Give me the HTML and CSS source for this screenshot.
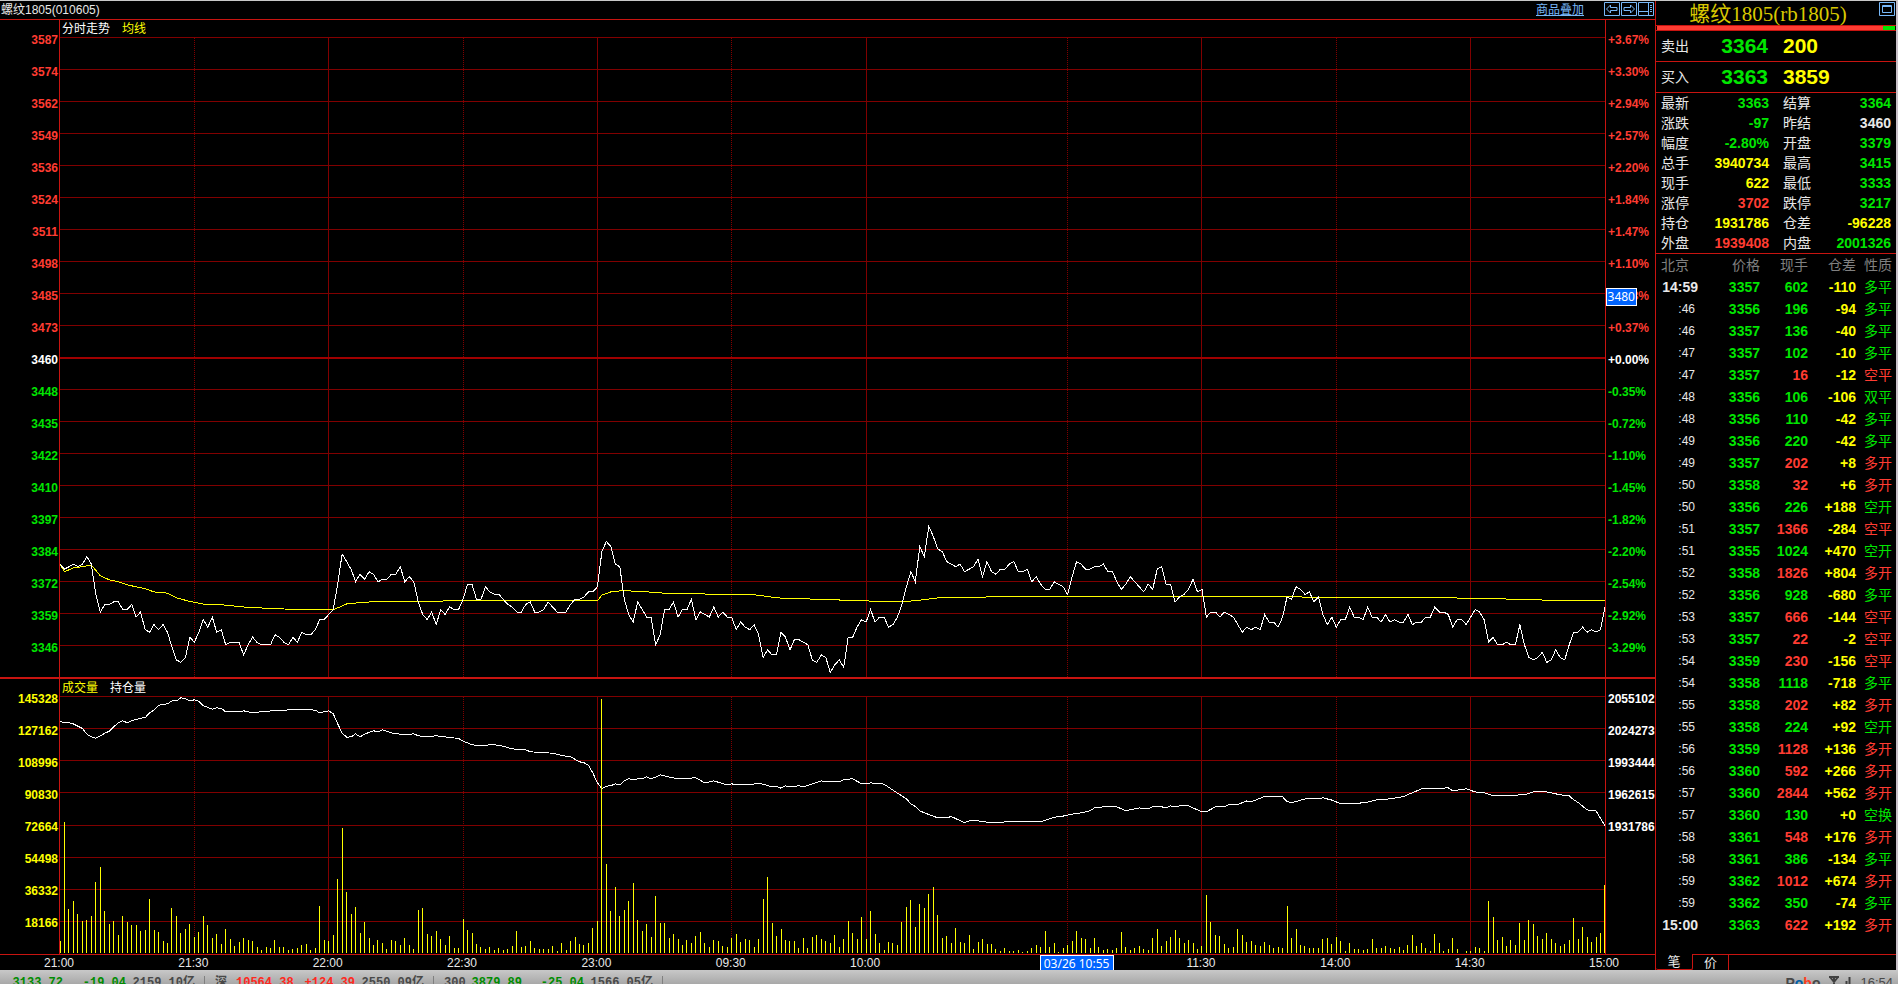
FILE: index.html
```html
<!DOCTYPE html>
<html lang="zh-CN">
<head>
    <meta charset="UTF-8">
    <meta name="viewport" content="width=device-width, initial-scale=1.0">
    <title>螺纹1805 分时走势</title>
    <link rel="stylesheet" href="styles.css">
</head>
<body>
    <div class="workspace">
        <main class="charts">
            <header class="chart-title">
                <span>螺纹1805(010605)</span>
                <div class="chart-tools">
                    <a href="#" class="overlay-link">商品叠加</a>
                    <button class="icon-btn" aria-label="上一个">
                        <svg width="16" height="14" viewBox="0 0 16 14"><path d="M.5.5h15v13H.5zM2.5 7l4-4v2.5h6.500v3h-6.500V11z"/></svg>
                    </button>
                    <button class="icon-btn" aria-label="下一个">
                        <svg width="16" height="14" viewBox="0 0 16 14"><path d="M.5.5h15v13H.5zM13.500 7l-4-4v2.500H3v3h6.500V11z"/></svg>
                    </button>
                    <button class="icon-btn" aria-label="布局">
                        <svg width="16" height="14" viewBox="0 0 16 14"><path d="M.5.5h15v13H.5zM10.500.5v13M.5 9.500h10M12 3.500h2M12 5.500h2M12 7.500h2M12 9.500h2"/></svg>
                    </button>
                </div>
            </header>

            <section class="price-chart">
                <div class="axis axis-left price-axis" id="priceAxis"></div>
                <div class="plot">
                    <div class="legend"><span class="white">分时走势</span><span class="yellow">均线</span></div>
                    <svg id="priceSvg" viewBox="0 0 1545 657" preserveAspectRatio="none"></svg>
                </div>
                <div class="axis axis-right price-axis" id="percentAxis"></div>
                <div class="cursor-price">3480</div>
            </section>

            <section class="volume-chart">
                <div class="axis axis-left volume-axis yellow" id="volumeAxis"></div>
                <div class="plot">
                    <div class="legend"><span class="yellow">成交量</span><span class="white">持仓量</span></div>
                    <svg id="volumeSvg" viewBox="0 0 1545 275" preserveAspectRatio="none"></svg>
                </div>
                <div class="axis axis-right volume-axis white" id="holdAxis"></div>
            </section>

            <footer class="time-axis">
                <span>21:00</span><span>21:30</span><span>22:00</span><span>22:30</span><span>23:00</span><span>09:30</span><span>10:00</span>
                <span class="cursor-time">03/26 10:55</span>
                <span>11:30</span><span>14:00</span><span>14:30</span><span>15:00</span>
            </footer>
        </main>

        <aside class="quote">
            <header class="quote-title">
                <h1>螺纹1805(rb1805)</h1>
                <button class="icon-btn" aria-label="窗口">
                    <svg width="16" height="14" viewBox="0 0 16 14"><path d="M.5.5h15v13H.5zM3.500 3.500h9v7h-9zM3.500 4.500h9"/></svg>
                </button>
            </header>
            <div class="ratio-bar"><i></i></div>
            <div class="order"><span>卖出</span><b class="green">3364</b><b class="yellow">200</b></div>
            <div class="order"><span>买入</span><b class="green">3363</b><b class="yellow">3859</b></div>

            <table class="stats">
                <tr><th>最新</th><td class="green">3363</td><th>结算</th><td class="green">3364</td></tr>
                <tr><th>涨跌</th><td class="green">-97</td><th>昨结</th><td>3460</td></tr>
                <tr><th>幅度</th><td class="green">-2.80%</td><th>开盘</th><td class="green">3379</td></tr>
                <tr><th>总手</th><td class="yellow">3940734</td><th>最高</th><td class="green">3415</td></tr>
                <tr><th>现手</th><td class="yellow">622</td><th>最低</th><td class="green">3333</td></tr>
                <tr><th>涨停</th><td class="red">3702</td><th>跌停</th><td class="green">3217</td></tr>
                <tr><th>持仓</th><td class="yellow">1931786</td><th>仓差</th><td class="yellow">-96228</td></tr>
                <tr><th>外盘</th><td class="red">1939408</td><th>内盘</th><td class="green">2001326</td></tr>
            </table>

            <table class="trades">
                <thead>
                    <tr><th class="col-time">北京</th><th class="col-price">价格</th><th class="col-num">现手</th><th class="col-num">仓差</th><th class="col-kind">性质</th></tr>
                </thead>
                <tbody id="trades"></tbody>
            </table>

            <nav class="tabs">
                <button class="tab active">笔</button>
                <button class="tab">价</button>
            </nav>
        </aside>
    </div>

    <footer class="status-bar">
        <div class="index first"><span class="up-dark">3133.72</span><span class="up-dark">-19.04</span><span>2159.10亿</span></div>
        <div class="index"><em>深</em><span class="down-dark">10564.38</span><span class="down-dark">+124.39</span><span>2550.09亿</span></div>
        <div class="index"><em>300</em><span class="up-dark">3879.89</span><span class="up-dark">-25.04</span><span>1566.05亿</span></div>
        <div class="status-right">
            <span class="brand">P<i class="blue">o</i><i class="orange">b</i>o</span>
            <svg width="22" height="12" viewBox="0 0 22 12"><path d="M0 1h10M1 1l4 5 4-5M5 1v11M14.500 9v3M17.500 5v7M20.500 1v11"/></svg>
            <span class="clock">16:54</span>
        </div>
    </footer>

    <script src="script.js"></script>
</body>
</html>
```

FILE: styles.css
```css
* {
    box-sizing: border-box;
}

body {
    display: flex;
    flex-direction: column;
    height: 100vh;
    margin: 0;
    overflow: hidden;
    border-top: 1px solid #c8c8c8;
    background-color: #000;
    color: #e8e8e8;
    font-family: "Liberation Sans", "Noto Sans CJK SC", sans-serif;
    font-size: 12px;
    line-height: 14px;
}

.red { color: #ff3c32; }
.green { color: #00e600; }
.yellow { color: #ffff00; }
.white { color: #fff; }

.workspace {
    display: flex;
    flex: 1;
    min-height: 0;
}

/* charts */
.charts {
    display: flex;
    flex: 1;
    flex-direction: column;
    min-width: 0;
}

.chart-title {
    display: flex;
    justify-content: space-between;
    height: 19px;
    padding: 1px 1px 0 1px;
    border-bottom: 1px solid #c81410;
    line-height: 16px;
}

.chart-tools {
    display: flex;
    align-items: flex-start;
    gap: 1px;
}

.overlay-link {
    margin-right: 19px;
    color: #78b8f8;
}

.icon-btn {
    height: 14px;
    padding: 0;
    border: 0;
    background: none;
    cursor: pointer;
}

.icon-btn svg {
    display: block;
    fill: none;
    stroke: #78b8f8;
}

.price-chart,
.volume-chart {
    display: flex;
    position: relative;
    min-height: 0;
}

.price-chart {
    flex: 657;
}

.volume-chart {
    flex: 275;
    border-top: 2px solid #c81410;
    border-bottom: 1px solid #c81410;
}

.plot {
    position: relative;
    flex: 1;
    min-width: 0;
}

.plot svg {
    display: block;
    position: absolute;
    width: 100%;
    height: 100%;
    fill: none;
    shape-rendering: crispEdges;
}

.legend {
    display: flex;
    position: absolute;
    top: 2px;
    left: 2px;
    gap: 12px;
}

.axis {
    display: flex;
    flex-direction: column;
    font-weight: bold;
}

.axis span {
    display: flex;
    flex: 32;
    align-items: center;
}

.price-axis {
    padding: 4px 0 13px;
}

.volume-axis {
    padding: 4px 0 15px;
}

.axis-left {
    width: 60px;
    padding-right: 1px;
    border-right: 1px solid #c81410;
}

.axis-left span {
    justify-content: flex-end;
}

.axis-right {
    width: 50px;
    padding-left: 2px;
    border-left: 1px solid #c81410;
}

.cursor-price {
    position: absolute;
    top: 268px;
    right: 18px;
    padding: 1px;
    border: 1px solid #fff;
    background-color: #0064ff;
    color: #fff;
    font-family: "Noto Sans", sans-serif;
    font-size: 12px;
    line-height: 14px;
}

.time-axis {
    display: grid;
    grid-template-columns: repeat(6, 30fr) 47fr 28fr repeat(3, 30fr) 0;
    height: 15px;
    padding: 0 50px 0 60px;
    line-height: 16px;
}

.time-axis span {
    width: 34px;
    margin-left: -18px;
    text-align: center;
}

.time-axis .cursor-time {
    width: 74px;
    margin-left: -37px;
    border: 1px solid #fff;
    border-bottom: 0;
    background-color: #0064ff;
    color: #fff;
    font-family: "Noto Sans", sans-serif;
}

/* quote panel */
.quote {
    display: flex;
    flex-direction: column;
    width: 243px;
    border-right: 2px solid #c8c0c8;
    border-left: 1px solid #c81410;
    font-size: 14px;
}

.quote-title {
    display: flex;
    align-items: flex-start;
    height: 25px;
    padding: 1px 1px 0 1px;
    border-bottom: 1px solid #c81410;
}

.quote-title h1 {
    flex: 1;
    margin: 0;
    color: #d8c800;
    font-family: "Liberation Serif", "Noto Sans CJK SC", serif;
    font-size: 21px;
    font-weight: normal;
    line-height: 24px;
    text-align: center;
}

.ratio-bar {
    height: 4px;
    margin: 0 1px;
    background-color: #ff3c32;
}

.ratio-bar i {
    display: block;
    width: 5%;
    height: 4px;
    margin-left: 95%;
    background-color: #00e600;
}

.order {
    display: grid;
    grid-template-columns: 47px 60px 1fr;
    align-items: center;
    height: 31px;
    padding-left: 5px;
    border-top: 1px solid #c81410;
}

.order b {
    font-size: 21px;
    line-height: 28px;
    text-align: right;
}

.order b + b {
    padding-left: 15px;
    text-align: left;
}

table {
    width: 100%;
    border-collapse: collapse;
    table-layout: fixed;
}

th {
    padding: 0;
    font-weight: normal;
    text-align: left;
}

td {
    padding: 0;
    font-weight: bold;
    text-align: right;
}

.stats {
    border-top: 1px solid #c81410;
}

.stats tr {
    height: 20px;
}

.stats th:first-child {
    width: 42px;
    padding-left: 5px;
}

.stats td {
    width: 71px;
}

.stats th + td + th {
    width: 42px;
    padding-left: 14px;
}

.stats td:last-child {
    width: 85px;
    padding-right: 5px;
}

.trades {
    border-top: 1px solid #c81410;
}

.trades tr {
    height: 22px;
}

.trades thead tr {
    height: 23px;
}

.trades th {
    color: #808080;
    text-align: right;
}

.trades .col-time {
    width: 42px;
    padding-left: 5px;
    text-align: left;
}

.col-price { width: 62px; }
.col-num { width: 48px; }

.trades .col-kind,
.trades td:last-child {
    width: 40px;
    padding-right: 4px;
    font-weight: normal;
}

.trades .second {
    padding-right: 3px;
    font-size: 12px;
    font-weight: normal;
}

.tabs {
    display: flex;
    height: 16px;
    margin-top: auto;
}

.tabs::after {
    flex: 1;
    border-top: 1px solid #c81410;
    content: "";
}

.tab {
    width: 36px;
    padding: 0;
    border: solid #c81410;
    border-width: 1px 1px 0 0;
    background: none;
    color: #e8e8e8;
    font-family: inherit;
    font-size: 13px;
    line-height: 15px;
    cursor: pointer;
}

.tab.active {
    width: 37px;
    border-width: 0 1px 1px 0;
    border-radius: 0 0 2px 2px;
}

/* status bar */
.status-bar {
    display: flex;
    height: 14px;
    padding-top: 6px;
    overflow: hidden;
    background: linear-gradient(#c8c8c8, #a8a8a8);
    color: #484848;
    font-family: "Liberation Mono", "Noto Sans CJK SC", monospace;
    font-weight: bold;
}

.index {
    display: grid;
    grid-template-columns: 21px 57px 62px 69px;
    padding: 0 9px 0 10px;
    border-right: 1px solid #808080;
    text-align: right;
}

.index.first {
    grid-template-columns: 63px 63px 69px;
    padding-left: 0;
}

.index em {
    font-style: normal;
    text-align: left;
}

.up-dark { color: #008c00; }
.down-dark { color: #ff2820; }

.status-right {
    display: flex;
    gap: 9px;
    margin-left: auto;
    padding-right: 5px;
}

.status-right svg {
    fill: none;
    stroke: #404040;
    stroke-width: 2;
}

.brand {
    font-family: "Liberation Sans", sans-serif;
    font-size: 14px;
}

.brand i {
    font-style: normal;
}

.blue { color: #0060a8; }
.orange { color: #ff3c20; }

.clock {
    font-family: "Liberation Sans", sans-serif;
    font-size: 13px;
    font-weight: normal;
}
```

FILE: script.js
```js
const MINUTES = 345;
const STEP = 1545 / MINUTES;
const GRID = '#800000';

const priceLabels = [3587, 3574, 3562, 3549, 3536, 3524, 3511, 3498, 3485, 3473, 3460, 3448, 3435, 3422, 3410, 3397, 3384, 3372, 3359, 3346];
const percentLabels = ['+3.67%', '+3.30%', '+2.94%', '+2.57%', '+2.20%', '+1.84%', '+1.47%', '+1.10%', '+0.73%', '+0.37%', '+0.00%',
    '-0.35%', '-0.72%', '-1.10%', '-1.45%', '-1.82%', '-2.20%', '-2.54%', '-2.92%', '-3.29%'];
const volumeLabels = [145328, 127162, 108996, 90830, 72664, 54498, 36332, 18166];
const holdLabels = [2055102, 2024273, 1993444, 1962615, 1931786, '', '', ''];

// last price of each minute, minus 3300
const prices = [
    78, 76, 77, 78, 77, 78, 81, 78, 66, 59, 62, 62, 63, 63, 60, 60, 62, 57, 59, 52, 51, 54, 52, 54, 51, 45, 40, 39, 41, 49,
    47, 51, 56, 53, 57, 51, 52, 46, 47, 47, 47, 42, 46, 49, 47, 46, 46, 46, 50, 49, 47, 46, 49, 47, 51, 50, 50, 52, 56, 56,
    58, 60, 70, 82, 79, 76, 71, 74, 72, 75, 74, 71, 72, 72, 74, 74, 77, 71, 73, 71, 63, 58, 56, 59, 54, 60, 58, 61, 60, 60,
    64, 70, 70, 64, 64, 69, 67, 66, 66, 64, 62, 61, 59, 59, 62, 63, 59, 59, 60, 63, 61, 59, 59, 59, 62, 64, 64, 65, 67, 67,
    69, 83, 87, 85, 78, 77, 64, 58, 55, 63, 60, 57, 57, 46, 50, 60, 60, 63, 57, 60, 60, 64, 56, 59, 58, 57, 61, 57, 59, 57,
    57, 52, 55, 53, 52, 54, 50, 41, 44, 42, 42, 51, 49, 44, 48, 48, 47, 46, 40, 39, 42, 41, 35, 38, 40, 37, 49, 49, 53, 56,
    55, 60, 55, 57, 57, 53, 54, 57, 62, 69, 75, 71, 85, 81, 93, 89, 84, 83, 79, 78, 77, 78, 75, 76, 77, 80, 73, 79, 75, 74,
    76, 76, 78, 79, 75, 75, 76, 71, 73, 70, 68, 68, 71, 70, 69, 66, 73, 79, 78, 76, 76, 77, 77, 78, 75, 75, 71, 68, 70, 73,
    71, 69, 67, 70, 68, 76, 77, 70, 70, 63, 65, 66, 68, 72, 67, 68, 57, 59, 59, 57, 59, 58, 57, 54, 51, 53, 52, 53, 52, 58,
    55, 55, 53, 57, 65, 64, 69, 68, 66, 67, 63, 65, 58, 54, 57, 53, 56, 56, 61, 57, 57, 56, 61, 57, 57, 55, 58, 55, 56, 55,
    55, 58, 54, 55, 55, 57, 57, 61, 59, 59, 58, 53, 56, 56, 54, 57, 60, 59, 56, 47, 49, 46, 46, 47, 46, 46, 54, 46, 41, 40,
    41, 43, 39, 40, 44, 41, 40, 46, 51, 51, 53, 51, 52, 51, 52, 61
];

// average line, [minute, price]
const average = [
    [0, 3378], [1, 3375], [3, 3376.5], [5, 3377], [7, 3377.7], [9, 3373.4], [11, 3371.8], [13, 3371], [15, 3369.8], [17, 3369],
    [19, 3368.3], [21, 3367], [24, 3366.5], [26, 3364.6], [29, 3363.2], [32, 3362.2], [35, 3362.2], [37, 3361.7], [41, 3361],
    [47, 3360.4], [55, 3359.9], [61, 3359.9], [64, 3362.2], [68, 3362.9], [73, 3363.3], [93, 3363.4], [120, 3363.4],
    [121, 3365.7], [123, 3367], [125, 3367.4], [127, 3367.4], [132, 3366.9], [137, 3366.2], [150, 3366.1], [156, 3365.7],
    [160, 3364.6], [180, 3363.4], [185, 3363], [188, 3363], [192, 3363.7], [196, 3364.6], [202, 3364.9], [230, 3365.3],
    [265, 3365.3], [280, 3364.9], [305, 3364.8], [322, 3364.2], [330, 3363.8], [338, 3363.4], [345, 3363.4]
];

// open interest, [minute, thousand lots]
const holdings = [
    [0, 2031.2], [2, 2030.2], [3, 2029.2], [5, 2024.8], [6, 2019.4], [7, 2016.8], [8, 2015.5], [9, 2017.8], [10, 2020.3],
    [11, 2022.2], [12, 2026.4], [13, 2029.9], [14, 2032.1], [15, 2030.2], [16, 2032.1], [18, 2034.7], [19, 2035], [20, 2039.8],
    [21, 2042.3], [22, 2047.1], [24, 2048.4], [25, 2051.2], [26, 2051.2], [27, 2054.1], [28, 2053.1], [29, 2051.2], [30, 2052.2],
    [31, 2050.9], [32, 2046.5], [34, 2043.3], [35, 2044.5], [36, 2044.2], [37, 2040.7], [40, 2040.7], [41, 2041.7], [43, 2039.8],
    [46, 2041.4], [49, 2041.7], [50, 2042.3], [54, 2043.3], [57, 2042.3], [58, 2039.8], [60, 2041.7], [61, 2038.8], [62, 2029.2],
    [63, 2020.6], [64, 2016.5], [65, 2016.8], [66, 2019.7], [67, 2016.8], [68, 2019.4], [70, 2022.6], [71, 2021.6], [72, 2023.5],
    [74, 2020.6], [77, 2018.7], [79, 2019.7], [80, 2017.8], [82, 2016.8], [84, 2017.8], [89, 2015.2], [90, 2012.7], [92, 2009.2],
    [94, 2008.2], [96, 2009.2], [98, 2008.9], [101, 2005.3], [104, 2004.4], [105, 2002.5], [110, 2001.2], [112, 1999],
    [114, 1997.7], [116, 1992.9], [117, 1992], [118, 1989.7], [119, 1982.1], [120, 1972.8], [121, 1967.4], [122, 1969.6],
    [123, 1970], [124, 1971.9], [125, 1970.9], [126, 1974.7], [127, 1976.7], [128, 1975.7], [129, 1976.7], [130, 1976.7],
    [131, 1978.6], [132, 1976.7], [133, 1978.3], [134, 1980.5], [136, 1978.3], [138, 1976.7], [142, 1977.6], [144, 1972.8],
    [146, 1974.7], [149, 1970.9], [150, 1971.9], [151, 1970.9], [156, 1971.9], [157, 1971.6], [159, 1969], [160, 1969.6],
    [161, 1967.7], [162, 1970], [163, 1969], [165, 1970], [166, 1969], [170, 1974.7], [171, 1973.8], [174, 1973.8], [175, 1976],
    [177, 1976.7], [179, 1971.9], [180, 1971.9], [181, 1972.8], [184, 1971.6], [186, 1965.8], [189, 1957.5], [190, 1952.8],
    [191, 1950.2], [192, 1946.1], [193, 1944.2], [196, 1939.4], [198, 1939.4], [199, 1940.6], [202, 1934.6], [203, 1936.5],
    [205, 1936.5], [208, 1934.6], [210, 1934.6], [211, 1935.6], [219, 1935.6], [222, 1940], [224, 1941], [226, 1942.9],
    [227, 1943.2], [230, 1946.1], [231, 1948.9], [233, 1949.9], [236, 1949.9], [238, 1946.1], [241, 1948.9], [243, 1948],
    [244, 1949.9], [246, 1949.9], [247, 1948.9], [248, 1950.8], [249, 1949.9], [250, 1950.8], [252, 1950.8], [255, 1945.1],
    [256, 1945.1], [258, 1949.9], [260, 1950.2], [261, 1951.8], [263, 1952.1], [265, 1955.6], [266, 1954.7], [269, 1959.8],
    [271, 1959.5], [273, 1959.5], [274, 1955], [275, 1953.7], [278, 1957.5], [281, 1957.5], [282, 1958.5], [284, 1956.3],
    [286, 1952.8], [289, 1952.8], [292, 1954.4], [294, 1956.6], [297, 1957.5], [300, 1959.8], [303, 1965.2], [304, 1967.1],
    [310, 1968], [311, 1965.2], [314, 1967.1], [316, 1964.2], [318, 1963.3], [320, 1960.4], [327, 1961.4], [329, 1964.2],
    [332, 1964.2], [335, 1961.4], [337, 1960.4], [338, 1956.6], [339, 1954], [341, 1947], [343, 1946.1], [345, 1931.8]
];

// volume of each minute, 1 unit = 566 lots
const volumes = [
    12, 131, 44, 52, 39, 32, 33, 37, 71, 86, 42, 29, 32, 18, 37, 31, 28, 28, 22, 23, 54, 23, 21, 12, 10, 45, 37, 20, 24, 29,
    16, 21, 37, 28, 15, 19, 9, 24, 14, 7, 11, 15, 13, 12, 6, 3, 6, 5, 13, 6, 6, 3, 4, 5, 8, 9, 3, 5, 47, 13,
    12, 18, 74, 125, 61, 39, 46, 20, 31, 15, 8, 13, 10, 4, 13, 12, 8, 15, 8, 4, 43, 45, 19, 17, 22, 14, 8, 17, 5, 5,
    34, 23, 20, 9, 6, 4, 6, 3, 5, 3, 4, 7, 22, 6, 7, 12, 5, 4, 4, 4, 7, 2, 10, 3, 12, 16, 9, 8, 10, 25,
    32, 254, 89, 42, 66, 37, 43, 52, 70, 33, 22, 29, 16, 57, 30, 30, 15, 19, 14, 8, 13, 10, 17, 21, 10, 6, 13, 12, 7, 6,
    15, 19, 11, 14, 13, 6, 14, 54, 76, 30, 17, 24, 13, 12, 12, 5, 15, 5, 16, 18, 14, 12, 10, 18, 6, 14, 32, 20, 14, 36,
    14, 42, 19, 10, 3, 11, 10, 8, 31, 46, 53, 26, 49, 45, 59, 66, 38, 15, 17, 10, 25, 11, 10, 18, 4, 11, 14, 9, 9, 4,
    2, 5, 2, 2, 3, 1, 2, 5, 8, 6, 22, 6, 10, 1, 5, 8, 12, 22, 15, 14, 5, 15, 6, 3, 4, 3, 5, 21, 6, 3,
    5, 7, 4, 3, 15, 24, 7, 12, 16, 23, 15, 10, 13, 10, 4, 7, 58, 31, 18, 17, 9, 5, 6, 24, 18, 11, 12, 8, 7, 11,
    8, 5, 6, 5, 47, 15, 24, 8, 7, 5, 5, 5, 14, 15, 9, 16, 12, 2, 10, 4, 4, 3, 4, 14, 5, 5, 7, 5, 4, 6,
    3, 8, 18, 7, 10, 5, 2, 19, 10, 2, 4, 15, 4, 0, 2, 2, 6, 5, 2, 52, 36, 13, 16, 7, 13, 8, 30, 13, 33, 29,
    17, 14, 20, 14, 10, 7, 9, 13, 35, 14, 26, 16, 11, 16, 20, 68
];

// time, price, volume, position change, kind, colour
const trades = [
    ['14:59', 3357, 602, '-110', '多平', 'green'],
    [':46', 3356, 196, '-94', '多平', 'green'],
    [':46', 3357, 136, '-40', '多平', 'green'],
    [':47', 3357, 102, '-10', '多平', 'green'],
    [':47', 3357, 16, '-12', '空平', 'red'],
    [':48', 3356, 106, '-106', '双平', 'green'],
    [':48', 3356, 110, '-42', '多平', 'green'],
    [':49', 3356, 220, '-42', '多平', 'green'],
    [':49', 3357, 202, '+8', '多开', 'red'],
    [':50', 3358, 32, '+6', '多开', 'red'],
    [':50', 3356, 226, '+188', '空开', 'green'],
    [':51', 3357, 1366, '-284', '空平', 'red'],
    [':51', 3355, 1024, '+470', '空开', 'green'],
    [':52', 3358, 1826, '+804', '多开', 'red'],
    [':52', 3356, 928, '-680', '多平', 'green'],
    [':53', 3357, 666, '-144', '空平', 'red'],
    [':53', 3357, 22, '-2', '空平', 'red'],
    [':54', 3359, 230, '-156', '空平', 'red'],
    [':54', 3358, 1118, '-718', '多平', 'green'],
    [':55', 3358, 202, '+82', '多开', 'red'],
    [':55', 3358, 224, '+92', '空开', 'green'],
    [':56', 3359, 1128, '+136', '多开', 'red'],
    [':56', 3360, 592, '+266', '多开', 'red'],
    [':57', 3360, 2844, '+562', '多开', 'red'],
    [':57', 3360, 130, '+0', '空换', 'green'],
    [':58', 3361, 548, '+176', '多开', 'red'],
    [':58', 3361, 386, '-134', '多平', 'green'],
    [':59', 3362, 1012, '+674', '多开', 'red'],
    [':59', 3362, 350, '-74', '多平', 'green'],
    ['15:00', 3363, 622, '+192', '多开', 'red']
];

function fillAxis(id, labels, colorOf) {
    document.getElementById(id).innerHTML = labels
        .map((text, i) => `<span class="${colorOf ? colorOf(i) : ''}">${text}</span>`)
        .join('');
}

function line(x1, y1, x2, y2, color, extra = '') {
    return `<line x1="${x1}" y1="${y1}" x2="${x2}" y2="${y2}" stroke="${color}" vector-effect="non-scaling-stroke" ${extra}/>`;
}

function polyline(points, color) {
    const list = points.map(p => p[0].toFixed(1) + ',' + p[1].toFixed(1)).join(' ');
    return `<polyline points="${list}" stroke="${color}" vector-effect="non-scaling-stroke"/>`;
}

function timeGrid(top, bottom) {
    const solid = [60, 120, 180, 255, 315].map(m => line(m * STEP, top, m * STEP, bottom, GRID));
    const dotted = [30, 90, 150, 225, 285].map(m => line(m * STEP, top, m * STEP, bottom, GRID, 'stroke-dasharray="1 1"'));
    return solid.concat(dotted).join('');
}

function drawPrice() {
    const y = price => 337.5 + (3460 - price) * 2.52;
    let out = timeGrid(18, 657);
    for (let i = 0; i < 20; i++) {
        const top = 17.5 + i * 32;
        out += i === 10 ? line(0, top, 1545, top, '#a00000', 'stroke-width="2"') : line(0, top, 1545, top, GRID);
    }
    out += polyline(average.map(p => [p[0] * STEP, y(p[1])]), '#ffff00');
    out += polyline(prices.map((p, i) => [i * STEP, y(3300 + p)]), '#ffffff');
    document.getElementById('priceSvg').innerHTML = out;
}

function drawVolume() {
    const y = hold => (2089.8 - hold) * 1.0459 - 18.5;
    let out = timeGrid(18, 275);
    [17, 49, 81, 113, 146, 178, 210, 242].forEach(top => {
        out += line(0, top + 0.5, 1545, top + 0.5, GRID);
    });
    out += polyline(holdings.map(p => [p[0] * STEP, y(p[1])]), '#ffffff');
    volumes.forEach((v, i) => {
        if (v) {
            const x = Math.min(Math.floor(i * STEP), 1544) + 0.5;
            out += line(x, 274 - v, x, 274, '#ffff00');
        }
    });
    document.getElementById('volumeSvg').innerHTML = out;
}

function drawTrades() {
    document.getElementById('trades').innerHTML = trades.map(t => `<tr>
        <td class="${t[0][0] === ':' ? 'second' : ''}">${t[0]}</td>
        <td class="green">${t[1]}</td>
        <td class="${t[5]}">${t[2]}</td>
        <td class="yellow">${t[3]}</td>
        <td class="${t[5]}">${t[4]}</td>
    </tr>`).join('');
}

const sideColor = i => i < 10 ? 'red' : i === 10 ? 'white' : 'green';

fillAxis('priceAxis', priceLabels, sideColor);
fillAxis('percentAxis', percentLabels, sideColor);
fillAxis('volumeAxis', volumeLabels);
fillAxis('holdAxis', holdLabels);
drawPrice();
drawVolume();
drawTrades();
```
